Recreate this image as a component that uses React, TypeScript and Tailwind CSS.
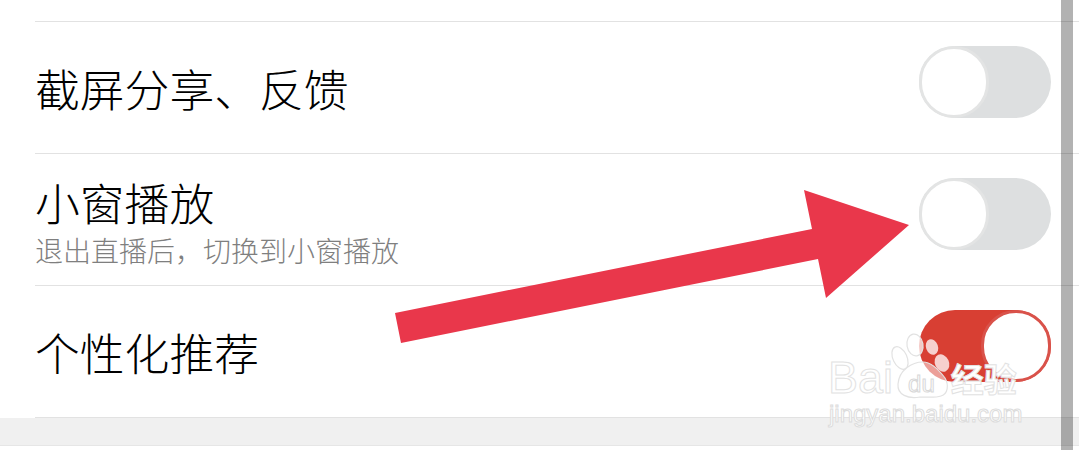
const font = "[font-family:'Noto_Sans_CJK_SC','Noto_Sans',sans-serif]";
const latin = "[font-family:'Liberation_Sans',sans-serif]";

const Toggle = ({ on = false }: { on?: boolean }) => {
  if (on) {
    return (
      <div className="mt-6 mr-7 flex h-[72px] w-[132px] shrink-0 justify-end rounded-full bg-[#d83f33]">
        <div className="h-[72px] w-[70px] rounded-full border-[3px] border-[#d9524a] bg-white" />
      </div>
    );
  }
  return (
    <div className="mt-6 mr-7 h-[72px] w-[132px] shrink-0 rounded-full bg-[#dddfe0]">
      <div className="h-[72px] w-[70px] rounded-full border-[3px] border-[#e3e4e4] bg-white" />
    </div>
  );
};

const Row = ({ title, sub, on }: { title: string; sub?: string; on?: boolean }) => (
  <div className="flex h-[132px] justify-between border-b border-[#e2e2e2]">
    <div className={sub ? "pt-[17px]" : "pt-[35px]"}>
      <div className="text-[44.8px] font-light leading-[62px] text-black">{title}</div>
      {sub && <div className="-mt-px text-[28px] font-light leading-[36px] text-[#7f7f7f]">{sub}</div>}
    </div>
    <Toggle on={on} />
  </div>
);

// arrow annotation drawn on top of the screenshot
const Arrow = () => (
  <svg className="absolute left-0 top-0" width="1079" height="450">
    <polygon
      points="395,313 812,229 804,190 909,225 826,298 818,259 401,343"
      fill="#e9374b"
    />
  </svg>
);

const Paw = () => (
  <svg className="absolute inset-0" width="200" height="70">
    <g fill="#ffffff" fillOpacity="0.72" stroke="#e2e2e2" strokeWidth="1.2">
      <ellipse cx="74" cy="26" rx="7" ry="12" transform="rotate(-25 74 26)" />
      <ellipse cx="89" cy="13" rx="8" ry="11" transform="rotate(-10 89 13)" />
      <path d="M72 52c1-14 14-22 25-22 9 0 16 8 22 16 4 7 3 16-4 18-6 2-14 1-21 1-12 2-23-2-22-13z" fillOpacity="0.5" />
    </g>
    <g fill="#f6d0ce" stroke="none">
      <ellipse cx="106" cy="15" rx="6" ry="8" transform="rotate(-20 106 15)" />
      <ellipse cx="116" cy="31" rx="7" ry="9" transform="rotate(-25 116 31)" />
    </g>
  </svg>
);

const Watermark = () => (
  <div className="absolute left-[826px] top-[332px] flex h-[96px] w-[200px] flex-col">
    <Paw />
    <div className="relative mt-[24px] flex h-[44px] items-end">
      <span className={`${latin} ml-[2px] text-[45px] leading-[44px] text-white [-webkit-text-stroke:1px_#e2e2e2]`}>Bai</span>
      <span className={`${latin} ml-[15px] text-[24px] leading-[32px] text-white [-webkit-text-stroke:1px_#d8d8d8]`}>du</span>
      <span className={`${font} ml-[16px] text-[33px] font-bold leading-[44px] text-white [-webkit-text-stroke:1px_#e2e2e2]`}>经验</span>
    </div>
    <div className={`${latin} relative ml-[3px] text-[24px] leading-[28px] text-white [-webkit-text-stroke:1px_#dcdcdc]`}>
      jingyan.baidu.com
    </div>
  </div>
);

export default function App() {
  return (
    <div className={`relative h-[450px] w-[1079px] overflow-hidden bg-white ${font}`}>
      <div className="ml-[35px] h-[22px] border-b border-[#e2e2e2]" />
      <div className="ml-[35px]">
        <Row title="截屏分享、反馈" />
        <Row title="小窗播放" sub="退出直播后，切换到小窗播放" />
        <Row title="个性化推荐" on />
      </div>
      <div className="h-[28px] border-b border-[#e6e6e6] bg-[#f0f0f0]" />
      <Arrow />
      <Watermark />
      {/* scrollbar */}
      <div className="absolute bottom-0 right-[6px] top-0 w-3 bg-black/30" />
    </div>
  );
}
